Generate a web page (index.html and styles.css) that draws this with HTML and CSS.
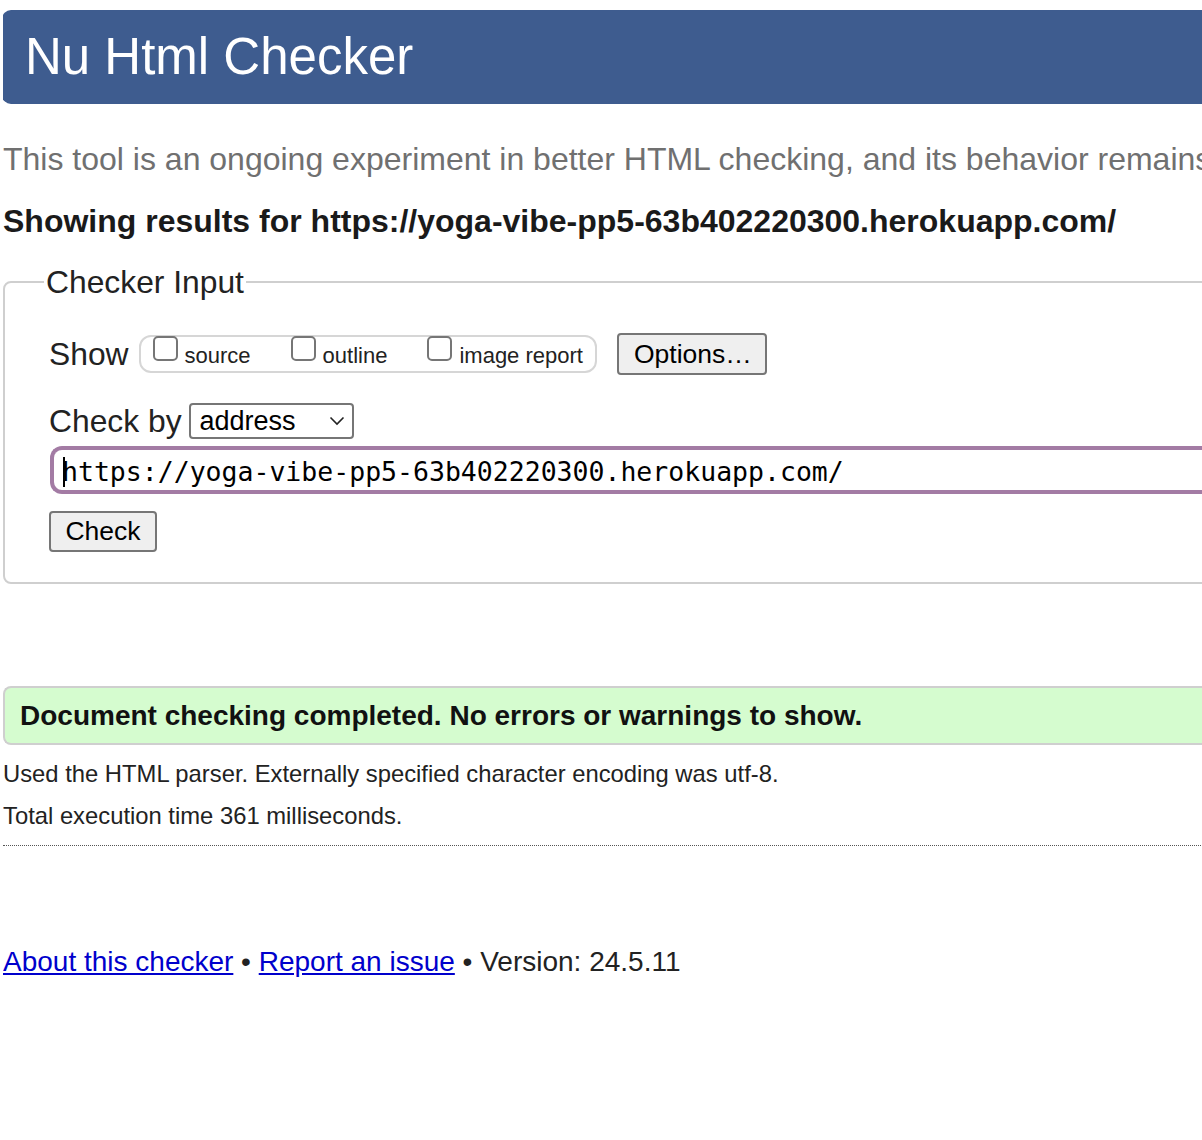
FILE: index.html
```html
<!DOCTYPE html>
<html lang="en">
<head>
<meta charset="utf-8">
<title>Nu Html Checker</title>
<link rel="stylesheet" href="styles.css">
</head>
<body>
<h1 class="title">Nu Html Checker</h1>
<p class="intro">This tool is an ongoing experiment in better HTML checking, and its behavior remains</p>
<p class="showing">Showing results for https://yoga-vibe-pp5-63b402220300.herokuapp.com/</p>
<form class="checker">
  <fieldset class="fs">
    <legend class="legend">Checker Input</legend>
    <div class="show-row">
      <span class="label">Show</span>
      <div class="group">
        <label class="opt"><span class="box"></span><span class="opt-text">source</span></label>
        <label class="opt"><span class="box"></span><span class="opt-text">outline</span></label>
        <label class="opt"><span class="box"></span><span class="opt-text">image report</span></label>
      </div>
      <span class="btn options">Options…</span>
    </div>
    <div class="by-row">
      <span class="label">Check by</span>
      <span class="select">address<svg class="chev" width="16" height="10" viewBox="0 0 16 10"><path d="M1.5 1.5 L8 8 L14.5 1.5" fill="none" stroke="#222" stroke-width="1.6"/></svg></span>
    </div>
    <div class="url"><span class="caret"></span>https://yoga-vibe-pp5-63b402220300.herokuapp.com/</div>
    <div class="check-row"><span class="btn check">Check</span></div>
  </fieldset>
</form>
<div class="success">Document checking completed. No errors or warnings to show.</div>
<p class="meta first">Used the HTML parser. Externally specified character encoding was utf-8.</p>
<p class="meta">Total execution time 361 milliseconds.</p>
<hr class="dots">
<p class="footer"><a href="#">About this checker</a> • <a href="#">Report an issue</a> • Version: 24.5.11</p>
</body>
</html>
```

FILE: styles.css
```css
html { overflow: hidden; }
body {
  margin: 10px 0 0 3px;
  width: 1400px;
  font-family: "Liberation Sans", Arial, sans-serif;
  color: #222;
  background: #fff;
}
.title {
  margin: 0 0 0 -1px;
  height: 94px;
  box-sizing: border-box;
  background: #3e5c8f;
  color: #fff;
  font-weight: normal;
  font-size: 51px;
  line-height: 94px;
  padding-left: 23px;
  border-radius: 9px 0 0 9px;
}
.intro {
  margin: 35px 0 0;
  font-size: 32px;
  line-height: 40px;
  color: #707070;
  white-space: nowrap;
}
.showing {
  margin: 20px 0 0;
  font-size: 32px;
  line-height: 44px;
  font-weight: bold;
  color: #1a1a1a;
  white-space: nowrap;
}
.checker { margin: 0; }
.fs {
  margin: 21px 0 0;
  padding: 18px 0 30px 44px;
  border: 2px solid #cfcfcf;
  border-radius: 8px 0 0 8px;
}
.legend {
  margin-left: -5px;
  padding: 0 2px;
  font-size: 31.8px;
  line-height: 36px;
  color: #222;
}
.show-row {
  display: flex;
  align-items: center;
  margin-top: 15px;
}
.label {
  font-size: 31.8px;
  line-height: 36px;
  color: #222;
  margin-right: 10px;
}
.group {
  display: flex;
  align-items: center;
  height: 38px;
  box-sizing: border-box;
  border: 2px solid #d6d6d6;
  border-radius: 12px;
  padding: 0 12px;
  font-size: 22px;
  gap: 40px;
}
.opt {
  display: flex;
  align-items: flex-end;
  gap: 7px;
  position: relative;
  top: -4px;
}
.box {
  width: 25px;
  height: 25px;
  border: 2px solid #767676;
  border-radius: 5px;
  box-sizing: border-box;
  margin-bottom: 4px;
}
.opt-text { line-height: 26px; position: relative; top: 4px; }
.btn {
  display: inline-block;
  box-sizing: border-box;
  background: #efefef;
  border: 2px solid #767676;
  border-radius: 4px;
  color: #000;
}
.options {
  margin-left: 20px;
  height: 42px;
  width: 150px;
  padding: 0 15px;
  font-size: 26.5px;
  line-height: 38px;
}
.by-row {
  display: flex;
  align-items: center;
  margin-top: 28px;
}
.by-row .label { margin-right: 7px; }
.select {
  display: flex;
  align-items: center;
  justify-content: space-between;
  width: 165px;
  height: 36px;
  box-sizing: border-box;
  border: 2px solid #767676;
  border-radius: 4px;
  padding: 0 7px 0 9px;
  font-size: 27px;
  color: #000;
}
.url {
  margin-top: 7px;
  margin-left: 1px;
  height: 48px;
  box-sizing: border-box;
  border: 4px solid #a37ba4;
  border-right: none;
  border-radius: 12px 0 0 12px;
  padding-left: 8px;
  font-family: "DejaVu Sans Mono", monospace;
  font-size: 26.5px;
  line-height: 43px;
  color: #000;
  white-space: nowrap;
  position: relative;
}
.caret {
  position: absolute;
  left: 9px;
  top: 7px;
  width: 2px;
  height: 30px;
  background: #000;
}
.check-row { margin-top: 17px; display: flex; }
.check {
  height: 41px;
  width: 108px;
  text-align: center;
  font-size: 26.5px;
  line-height: 37px;
}
.success {
  margin-top: 102px;
  height: 59px;
  box-sizing: border-box;
  background: #d5fccf;
  border: 2px solid #cfcfcf;
  border-right: none;
  border-radius: 8px 0 0 8px;
  padding-left: 15px;
  font-size: 28px;
  font-weight: bold;
  line-height: 55px;
  color: #111;
}
.meta {
  margin: 0;
  font-size: 23.8px;
  line-height: 42px;
  color: #222;
}
.meta.first { margin-top: 8px; }
.dots {
  margin: 8px 0 0;
  border: none;
  border-top: 1px dotted #555;
  height: 0;
}
.footer {
  margin: 96px 0 0;
  font-size: 28px;
  line-height: 40px;
  color: #222;
}
.footer a { color: #0000cc; }
```
